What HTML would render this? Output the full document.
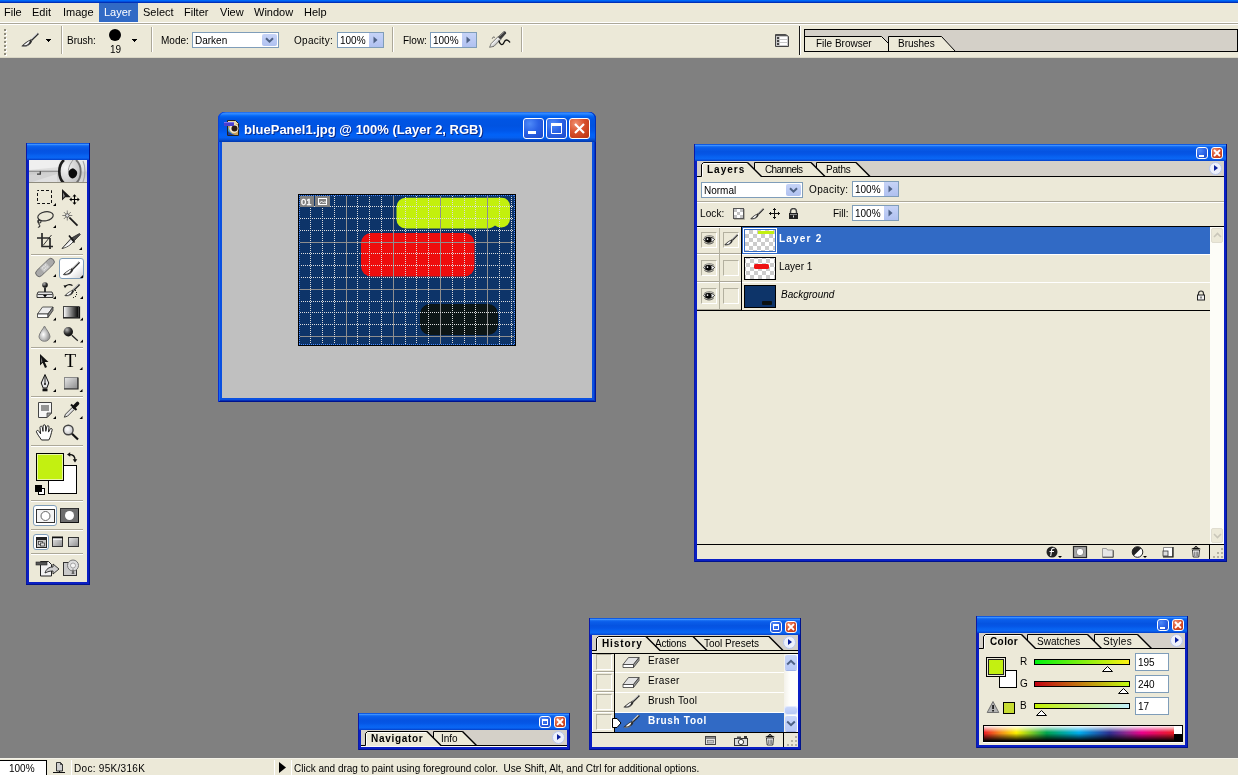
<!DOCTYPE html>
<html>
<head>
<meta charset="utf-8">
<title>Photoshop</title>
<style>
*{box-sizing:border-box;margin:0;padding:0}
html,body{width:1238px;height:775px;overflow:hidden;background:#808080}
body{font-family:"Liberation Sans",sans-serif;font-size:11px;color:#000;position:relative}
.abs{position:absolute}
.t{position:absolute;white-space:nowrap;line-height:12px;font-size:10px}
.b{font-weight:bold}
/* top chrome */
#topblue{left:0;top:0;width:1238px;height:3px;background:linear-gradient(#0068f8 0,#0068f8 33%,#0050e0 34%,#0050e0 66%,#0030b8 67%)}
#menubar{left:0;top:3px;width:1238px;height:19px;background:#ece9d8}
#menubar .t{top:3px;font-size:11px;line-height:13px}
#menusep{left:0;top:22px;width:1238px;height:3px;background:#aca899;border-top:1px solid #fff;border-bottom:1px solid #fff}
#optbar{left:0;top:25px;width:1238px;height:33px;background:#ece9d8}
#optshadow{left:0;top:57px;width:1238px;height:1px;background:#d9d6c5}
.vsep{position:absolute;width:2px;border-left:1px solid #aca899;border-right:1px solid #fff}
.inp{position:absolute;background:#fff;border:1px solid #7f9db9}
.arrbtn{position:absolute;background:linear-gradient(#c6d3f7,#b0c1f0);border-radius:2px}
/* XP palette windows */
.win{position:absolute;background:#0a1fc8}
.win .title{position:absolute;left:0;top:0;right:0;background:linear-gradient(#0a4fe0 0,#2b71f0 2px,#0a5be8 5px,#0553df 60%,#0345d4 100%)}
.win .body{position:absolute;background:#ece9d8}
.tabstrip{position:absolute;left:0;right:0;top:0;height:16px;background:#d4d0c8;border-bottom:1px solid #000}
.capbtn{top:6px;width:21px;height:21px;border-radius:3px;border:1px solid #fff;background:radial-gradient(circle at 30% 25%,#4f8af8 0,#2a62e6 45%,#1c48c8 100%)}
.capbtn svg{position:absolute;left:-1px;top:-1px}
.capx{background:radial-gradient(circle at 30% 25%,#f09070 0,#d8502c 45%,#b8300e 100%)}

.pw{position:absolute;background:#0a1fc4;box-shadow:inset 1px 0 0 #0a19a8,inset -1px 0 0 #00138c,inset 0 -1px 0 #00138c}
.pt{position:absolute;height:17px;background:linear-gradient(to bottom,#0f5ae2 0,#0f5ae2 5%,#3d92ff 7%,#3a8eff 11%,#1a70f2 14%,#0a5eea 22%,#0553e1 45%,#0556e6 60%,#0862f0 75%,#0a66f4 88%,#0650dc 94%,#0340c8 100%)}
.pb{position:absolute;background:#ece9d8}
.sbtn{position:absolute;width:12px;height:12px;border:1px solid #fff;border-radius:3px;background:radial-gradient(circle at 30% 25%,#4f8af8 0,#2a62e6 50%,#1c48c8 100%)}
.sbtn.x{background:radial-gradient(circle at 30% 25%,#f09070 0,#d8502c 50%,#b8300e 100%)}
.sbtn svg{position:absolute;left:-1px;top:-1px}
.fly{position:absolute;width:13px;height:13px;border-radius:50%;background:#eef1fb;border:1px solid #b9c6ee}
.fly:after{content:"";position:absolute;left:4px;top:2px;border-left:4px solid #0a1f9c;border-top:3.5px solid transparent;border-bottom:3.5px solid transparent}
.hl{position:absolute;height:1px}
.sunk{position:absolute;border:1px solid;border-color:#b3b09f #fff #fff #b3b09f;background:#ece9d8}
/* status */
#status{left:0;top:759px;width:1238px;height:16px;background:#ece9d8}
</style>
</head>
<body>
<svg width="0" height="0" style="position:absolute"><defs>
<g id="i-brush"><path d="M16.300 .8l1.700 1.300-6.800 6.700-1.700-1.500z" fill="#2a2a2a"/><path d="M16.300 1.200l-6.200 6" stroke="#f0f0f0" stroke-width="1.100"/><path d="M9.600 7.200l1.700 1.500-.6 1-1.900-1.700z" fill="#777"/><path d="M9.300 7.800C6.500 8.800 3 11.500.3 14.200c3.200 1 7.500 0 9.500-2.700.8-1.200 1.100-2 1.200-2.500z" fill="#2b2b2b"/><path d="M8.800 8.700c-2.200 1-4.400 2.600-6.300 4.600 1.800.2 3.400-.3 4.600-1.300 1-.9 1.500-2 1.700-3.300z" fill="#f4f4f4"/><path d="M1.200 14.400c2.700.5 5.600-.3 7.300-2" stroke="#8a8a8a" stroke-width=".7" fill="none"/></g>
<g id="i-eye"><path d="M.8 2.900C3.200 .2 8.300-.1 11.200 2.300" fill="none" stroke="#6a6a6a" stroke-width=".8"/><path d="M.6 4.600C3 1.500 9 1.500 11.600 4.300 9.300 8 3.300 8.300 .6 4.600z" fill="#f4f4f4" stroke="#2a2a2a" stroke-width="1"/><ellipse cx="5.400" cy="4.700" rx="3.200" ry="2.700" fill="#050505"/><circle cx="4.500" cy="4.100" r=".85" fill="#fff"/><path d="M1.300 7.100C4 9.600 8.500 9.500 10.800 6.800" fill="none" stroke="#333" stroke-width=".9"/></g>
<g id="i-eraser"><path d="M6.500 1.500h10.500l-5.500 7h-10.500z" fill="#e4e4e4" stroke="#3a3a3a" stroke-width=".8"/><path d="M1 8.500h10.500v3h-10.500z" fill="#fff" stroke="#3a3a3a" stroke-width=".8"/><path d="M11.500 8.500l5.500-7v3l-5.500 7z" fill="#9a9a9a" stroke="#3a3a3a" stroke-width=".8"/></g>
<pattern id="chk" width="8" height="8" patternUnits="userSpaceOnUse" x="2" y="2"><rect width="8" height="8" fill="#fff"/><rect x="4" width="4" height="4" fill="#ccc"/><rect y="4" width="4" height="4" fill="#ccc"/></pattern>
</defs></svg>
<div id="root" style="position:absolute;left:0;top:0;width:1238px;height:775px;will-change:transform">
<!-- TOP CHROME -->
<div class="abs" id="topblue"></div>
<div class="abs" id="menubar">
  <div class="abs" style="left:99px;top:0;width:39px;height:19px;background:#316ac5"></div>
  <span class="t" style="left:4px">File</span>
  <span class="t" style="left:32px">Edit</span>
  <span class="t" style="left:63px">Image</span>
  <span class="t" style="left:104px;color:#fff">Layer</span>
  <span class="t" style="left:143px">Select</span>
  <span class="t" style="left:184px">Filter</span>
  <span class="t" style="left:220px">View</span>
  <span class="t" style="left:254px">Window</span>
  <span class="t" style="left:304px">Help</span>
</div>
<div class="abs" id="menusep"></div>
<div class="abs" id="optbar"></div>
<div class="abs" id="optshadow"></div>
<!-- OPTIONS BAR CONTENT -->
<svg class="abs" style="left:4px;top:29px" width="4" height="27"><rect x="1" y="1" width="2" height="2" fill="#fff"/><rect x="0" y="0" width="2" height="2" fill="#8d8a7b"/><rect x="1" y="5" width="2" height="2" fill="#fff"/><rect x="0" y="4" width="2" height="2" fill="#8d8a7b"/><rect x="1" y="9" width="2" height="2" fill="#fff"/><rect x="0" y="8" width="2" height="2" fill="#8d8a7b"/><rect x="1" y="13" width="2" height="2" fill="#fff"/><rect x="0" y="12" width="2" height="2" fill="#8d8a7b"/><rect x="1" y="17" width="2" height="2" fill="#fff"/><rect x="0" y="16" width="2" height="2" fill="#8d8a7b"/><rect x="1" y="21" width="2" height="2" fill="#fff"/><rect x="0" y="20" width="2" height="2" fill="#8d8a7b"/><rect x="1" y="25" width="2" height="2" fill="#fff"/><rect x="0" y="24" width="2" height="2" fill="#8d8a7b"/></svg>
<svg class="abs" style="left:21px;top:32px" width="19" height="16" viewBox="0 0 19 16"><use href="#i-brush"/></svg>
<svg class="abs" style="left:46px;top:39px" width="6" height="4"><path d="M0 0h5v1h-1v1h-1v1h-1v-1h-1v-1h-1z" fill="#000"/></svg>
<div class="vsep" style="left:61px;top:26px;height:28px"></div>
<span class="t" style="left:67px;top:35px">Brush:</span>
<div class="abs" style="left:109px;top:29px;width:12px;height:12px;border-radius:50%;background:#000"></div>
<span class="t" style="left:110px;top:44px">19</span>
<svg class="abs" style="left:132px;top:39px" width="6" height="4"><path d="M0 0h5v1h-1v1h-1v1h-1v-1h-1v-1h-1z" fill="#000"/></svg>
<div class="vsep" style="left:151px;top:27px;height:25px"></div>
<span class="t" style="left:161px;top:35px">Mode:</span>
<div class="inp" style="left:192px;top:32px;width:87px;height:16px"></div>
<span class="t" style="left:195px;top:35px;">Darken</span>
<div class="arrbtn" style="left:262px;top:34px;width:15px;height:12px"></div>
<svg class="abs" style="left:265px;top:37px" width="9" height="7"><path d="M1 1.2L4.5 4.7 8 1.2" fill="none" stroke="#4d6185" stroke-width="2"/></svg>
<span class="t" style="left:294px;top:35px;letter-spacing:.3px">Opacity:</span>
<div class="inp" style="left:337px;top:32px;width:47px;height:16px"></div>
<span class="t" style="left:340px;top:35px;">100%</span>
<div class="arrbtn" style="left:369px;top:33px;width:14px;height:14px;border-radius:0"></div>
<svg class="abs" style="left:373px;top:36px" width="5" height="8"><path d="M0.5 0.5L4.5 4 0.5 7.5z" fill="#4d6185"/></svg>
<div class="vsep" style="left:392px;top:27px;height:25px"></div>
<span class="t" style="left:403px;top:35px">Flow:</span>
<div class="inp" style="left:430px;top:32px;width:47px;height:16px"></div>
<span class="t" style="left:433px;top:35px;">100%</span>
<div class="arrbtn" style="left:462px;top:33px;width:14px;height:14px;border-radius:0"></div>
<svg class="abs" style="left:466px;top:36px" width="5" height="8"><path d="M0.5 0.5L4.5 4 0.5 7.5z" fill="#4d6185"/></svg>
<svg class="abs" style="left:489px;top:30px" width="23" height="19" viewBox="0 0 23 19"><defs><linearGradient id="abg" x1="0" y1="0" x2="1" y2="1"><stop offset="0" stop-color="#444"/><stop offset=".45" stop-color="#f2f2f2"/><stop offset="1" stop-color="#555"/></linearGradient></defs><path d="M.6 17.300l1.600-3.800 6.800-6.800 2.800 2.800-6.800 6.800z" fill="url(#abg)" stroke="#333" stroke-width=".6"/><path d="M9 6.700l5.800-5.400c1.200-.6 2.800.8 2.300 2.200l-5.300 6z" fill="#3c3c3c"/><path d="M10.500 6.300l4.700-4.300" stroke="#8a8a8a" stroke-width=".9"/><path d="M3.300 8.600c.2-1.600 1.800-2 2.600-1" fill="none" stroke="#444" stroke-width=".9"/><path d="M9.800 10.500c.8 3 2.500 4.800 4 3.800s1.300-4 3.500-4.300c1.800-.2 2.600 1.300 3.800 2.400" fill="none" stroke="#111" stroke-width="1.300"/></svg>
<div class="vsep" style="left:521px;top:27px;height:25px"></div>
<svg class="abs" style="left:775px;top:33px" width="15" height="15" viewBox="0 0 15 15"><path d="M0.5 1.5h10l3 2v10h-13z" fill="#c8c8c8" stroke="#444" stroke-width="1"/><path d="M1 1.5h10l2 1.5h-12z" fill="#555"/><g fill="#444"><rect x="2" y="4" width="2" height="2"/><rect x="2" y="7" width="2" height="2"/><rect x="2" y="10" width="2" height="2"/></g><g fill="#fff"><rect x="5" y="4" width="7" height="2"/><rect x="5" y="7" width="7" height="2"/><rect x="5" y="10" width="7" height="2"/></g></svg>
<div class="abs" style="left:799px;top:26px;width:1px;height:29px;background:#1a1a1a"></div>
<div class="abs" style="left:800px;top:26px;width:1px;height:29px;background:#fff"></div>
<svg class="abs" style="left:804px;top:29px" width="434" height="23" viewBox="0 0 434 23"><rect x="0.5" y="0.5" width="433" height="22" fill="#d4d0c8" stroke="#000"/><path d="M0.5 22.5V7.5H77.5L84.5 14.5V7.5H137.5L151.5 22.5z" fill="#ece9d8" stroke="#000"/><path d="M84.5 14v8.5" stroke="#000"/></svg>
<span class="t" style="left:816px;top:38px">File Browser</span>
<span class="t" style="left:898px;top:38px">Brushes</span>

<!-- TOOLBOX -->
<svg class="abs" style="left:26px;top:143px" width="64" height="442" viewBox="26 143 64 442">
<defs>
<linearGradient id="tbt" x1="0" y1="0" x2="0" y2="1"><stop offset="0" stop-color="#0f5ae2"/><stop offset=".05" stop-color="#0f5ae2"/><stop offset=".07" stop-color="#3d92ff"/><stop offset=".11" stop-color="#3a8eff"/><stop offset=".14" stop-color="#1a70f2"/><stop offset=".22" stop-color="#0a5eea"/><stop offset=".45" stop-color="#0553e1"/><stop offset=".6" stop-color="#0556e6"/><stop offset=".75" stop-color="#0862f0"/><stop offset=".88" stop-color="#0a66f4"/><stop offset=".94" stop-color="#0650dc"/><stop offset="1" stop-color="#0340c8"/></linearGradient>
<linearGradient id="gwk" x1="0" y1="0" x2="1" y2="0"><stop offset="0" stop-color="#fff"/><stop offset="1" stop-color="#000"/></linearGradient>
<linearGradient id="ggr" x1="0" y1="0" x2="1" y2="1"><stop offset="0" stop-color="#e8e8e8"/><stop offset="1" stop-color="#8c8c8c"/></linearGradient>
<linearGradient id="gsel" x1="0" y1="0" x2="1" y2="1"><stop offset="0" stop-color="#fff"/><stop offset=".6" stop-color="#fff"/><stop offset="1" stop-color="#cfcfcf"/></linearGradient>
<radialGradient id="gball" cx=".35" cy=".3" r=".8"><stop offset="0" stop-color="#b5b5b5"/><stop offset=".55" stop-color="#2c2c2c"/><stop offset="1" stop-color="#000"/></radialGradient>
<radialGradient id="gdrop" cx=".4" cy=".55" r=".6"><stop offset="0" stop-color="#fff"/><stop offset="1" stop-color="#8a8a8a"/></radialGradient>
<radialGradient id="glens" cx=".4" cy=".4" r=".7"><stop offset="0" stop-color="#fff"/><stop offset="1" stop-color="#bdbdbd"/></radialGradient>
</defs>
<rect x="26" y="143" width="64" height="442" fill="#0a1fc4"/>
<rect x="26" y="143" width="1" height="442" fill="#0a19a8"/><rect x="89" y="143" width="1" height="442" fill="#00138c"/><rect x="26" y="584" width="64" height="1" fill="#00138c"/>
<rect x="27" y="143" width="62" height="17" fill="url(#tbt)"/>
<rect x="29" y="160" width="58" height="422" fill="#ece9d8"/>
<!-- eye picture -->
<clipPath id="eyeclip"><rect x="29" y="160" width="58" height="23"/></clipPath>
<linearGradient id="eyebg" x1="0" y1="0" x2="0" y2="1"><stop offset="0" stop-color="#ececec"/><stop offset=".45" stop-color="#dcdcdc"/><stop offset=".55" stop-color="#c9c9c9"/><stop offset="1" stop-color="#dadada"/></linearGradient>
<radialGradient id="eyein" cx=".3" cy=".35" r=".8"><stop offset="0" stop-color="#f6f6f6"/><stop offset="1" stop-color="#bcbcbc"/></radialGradient>
<g clip-path="url(#eyeclip)">
<rect x="29" y="160" width="58" height="23" fill="url(#eyebg)"/>
<path d="M29 160h30v7l-30 3z" fill="#efefef"/>
<path d="M29 171.300h30" stroke="#8a8a8a" stroke-width="1.200"/>
<path d="M29 175l28-3v11H29z" fill="#d2d2d2"/><path d="M29 183l28-9v9z" fill="#e0e0e0"/>
<path d="M37 174.200h3.300v-3" stroke="#3a3a3a" stroke-width="1.300" fill="none"/>
<ellipse cx="70" cy="171.500" rx="11" ry="13.500" fill="url(#eyein)"/>
<path d="M64 160c-6 5-6.500 17 0 23.500" stroke="#1c1c1c" stroke-width="2.600" fill="none"/>
<path d="M76 160c6 5 6.500 17 0 23.500" stroke="#6e6e6e" stroke-width="1.800" fill="none"/>
<path d="M73 160c-3 4-5 8-4.500 12" stroke="#9a9a9a" stroke-width="1" fill="none"/>
<path d="M68.500 172.500c.5-2.500 2.500-4 4.500-4.200 2.500 1 4.500 3 4.200 5.200-.5 2.800-2.500 5-4.700 5-2.500-.5-4.300-3-4-6z" fill="#0a0a0a"/>
<path d="M83 161c2.500 5 2.500 15 0 21" stroke="#a8a8a8" stroke-width="1.200" fill="none"/>
</g>
<rect x="29" y="182" width="58" height="1" fill="#8f8c7e"/>
<!-- separators -->
<g fill="#aca899"><rect x="31" y="254" width="52" height="1"/><rect x="31" y="347" width="52" height="1"/><rect x="31" y="396" width="52" height="1"/><rect x="31" y="445" width="52" height="1"/><rect x="31" y="500" width="52" height="1"/><rect x="31" y="529" width="52" height="1"/><rect x="31" y="553" width="52" height="1"/></g>
<g fill="#fff"><rect x="31" y="255" width="52" height="1"/><rect x="31" y="348" width="52" height="1"/><rect x="31" y="397" width="52" height="1"/><rect x="31" y="446" width="52" height="1"/><rect x="31" y="501" width="52" height="1"/><rect x="31" y="530" width="52" height="1"/><rect x="31" y="554" width="52" height="1"/></g>

<!-- row1 marquee / move -->
<rect x="37.500" y="190.500" width="14" height="13" fill="none" stroke="#111" stroke-width="1" stroke-dasharray="3 2" stroke-dashoffset="1.500"/>
<path d="M56 206v-3l-3 3z" fill="#000"/>
<path d="M62 189v11.500l3.300-3.200h5.500z" fill="#1a1a1a"/><path d="M63 192.500v5.500l2-2z" fill="#8a8a8a"/>
<path d="M74.500 195.500v8M70.500 199.500h8" stroke="#000" stroke-width="1.100"/><path d="M74.500 194.300l2 2.300h-4zM74.500 204.700l2-2.300h-4zM69.300 199.500l2.300-2v4zM79.700 199.500l-2.300-2v4z" fill="#000"/>
<!-- row2 lasso / wand -->
<ellipse cx="45.500" cy="216.300" rx="7.800" ry="4.500" transform="rotate(-10 45.500 216.300)" fill="none" stroke="#333" stroke-width="1.200"/>
<path d="M39 219.500c-2 1.500-1.500 3.500.5 3.500s2-2.500.2-2.500-1.500 3 -.2 4.500-1 2-1.500 2.500" fill="none" stroke="#333" stroke-width="1.100"/>
<path d="M56 228v-3l-3 3z" fill="#000"/>
<path d="M67.300 210.500v10M62.300 215.500h10M63.800 212l7 7M70.800 212l-7 7" stroke="#555" stroke-width=".7"/><circle cx="67.300" cy="215.500" r="1.800" fill="#ddd" stroke="#222" stroke-width=".6"/>
<path d="M69.500 217.700l8 8" stroke="#1a1a1a" stroke-width="1.700"/>
<!-- row3 crop / slice -->
<path d="M37 238h13M42 233v13.500h11M50 238v11" stroke="#2a2a2a" stroke-width="1.700" fill="none"/><path d="M43 245.500l8.500-10.500" stroke="#222" stroke-width=".9"/>
<path d="M62 248.500l9.500-10.500 3 2.500c-3.500 4-7.500 7-12.500 8z" fill="#d9d9d9" stroke="#222" stroke-width=".9"/><path d="M71.500 238l8-4.500.8 1-5.800 6z" fill="#4a4a4a" stroke="#222" stroke-width=".8"/><path d="M63.500 247.800c3.500-1 7-3.500 10-7l-1-.8z" fill="#fff"/><path d="M69 235.500l5.500 7" stroke="#111" stroke-width="1.600"/>
<path d="M82 250v-3l-3 3z" fill="#000"/>
<!-- row4 heal / brush(selected) -->
<g transform="rotate(-44 45 267.500)"><rect x="33.500" y="264" width="23" height="7" rx="3.500" fill="#a9a9a9" stroke="#666" stroke-width=".9"/><rect x="41" y="264.500" width="8" height="6" fill="#c6c6c6"/><g fill="#eee"><circle cx="43" cy="266" r=".6"/><circle cx="45" cy="266" r=".6"/><circle cx="47" cy="266" r=".6"/><circle cx="43" cy="268.500" r=".6"/><circle cx="45" cy="268.500" r=".6"/><circle cx="47" cy="268.500" r=".6"/></g></g>
<path d="M56 277v-3l-3 3z" fill="#000"/>
<rect x="59.500" y="258.500" width="24" height="20" rx="2.500" fill="url(#gsel)" stroke="#7f9db9"/>
<g transform="translate(62.500 260.800) scale(.98)"><use href="#i-brush"/></g>
<path d="M83 278v-3l-3 3z" fill="#000"/>
<!-- row5 stamp / history brush -->
<circle cx="45" cy="285" r="2.800" fill="url(#gball)"/><rect x="44" y="287.500" width="2" height="4.500" fill="#333"/><path d="M38 292h14l1 2.500v3h-16v-3z" fill="#e6e6e6" stroke="#222" stroke-width=".9"/><path d="M37.500 294.500h15" stroke="#222" stroke-width=".8"/><path d="M43 295h4l-2 2.500z" fill="#000"/>
<path d="M56 299v-3l-3 3z" fill="#000"/>
<g transform="translate(64 283) scale(.9)"><use href="#i-brush"/></g>
<path d="M65 287c1.500-2.500 5-3 7.500-1.500" fill="none" stroke="#111" stroke-width="1.100"/><path d="M63.500 285.200l3.200.3-1.700 2.800z" fill="#111"/>
<g fill="#222"><rect x="75" y="290" width="1" height="1"/><rect x="76" y="292" width="1" height="1"/><rect x="76" y="294" width="1" height="1"/><rect x="75" y="296" width="1" height="1"/><rect x="73" y="297" width="1" height="1"/></g>
<path d="M83 299v-3l-3 3z" fill="#000"/>
<!-- row6 eraser / gradient -->
<path d="M42.500 307h10.500l-5 7h-10.500z" fill="#ececec" stroke="#333" stroke-width=".8"/><path d="M37.500 314h10.500v3.500h-10.500z" fill="#fff" stroke="#333" stroke-width=".8"/><path d="M48 314l5-7v3.500l-5 7z" fill="#8a8a8a" stroke="#333" stroke-width=".8"/>
<path d="M56 320.5v-3l-3 3z" fill="#000"/>
<rect x="63.500" y="306.500" width="15" height="11" fill="url(#gwk)" stroke="#444" stroke-width="1"/><path d="M63 318h16.500v-11.500" stroke="#111" stroke-width="1.200" fill="none"/>
<path d="M83 320.5v-3l-3 3z" fill="#000"/>
<!-- row7 blur / dodge -->
<path d="M44.500 326c-1.500 3-5.500 7.500-5.500 10.500a5.500 4.800 0 0 0 11 0c0-3-4-7.500-5.500-10.500z" fill="url(#gdrop)" stroke="#777" stroke-width=".9"/>
<path d="M56 342.5v-3l-3 3z" fill="#000"/>
<circle cx="68.300" cy="331.700" r="4.700" fill="url(#gball)"/><path d="M71.800 335.200l6 5.600" stroke="#222" stroke-width="1.200"/>
<path d="M83 342.5v-3l-3 3z" fill="#000"/>
<!-- row8 path select / type -->
<path d="M40 354v11.500l2.700-2.700 2.300 5.200 2-1-2.300-5h3.800z" fill="#111"/><path d="M41 357v6l1.500-1.500z" fill="#777"/>
<path d="M56 370v-3l-3 3z" fill="#000"/>
<text x="64.500" y="367" font-family="Liberation Serif" font-size="19" fill="#000">T</text>
<path d="M82.5 370v-3l-3 3z" fill="#000"/>
<!-- row9 pen / shape -->
<path d="M45 374.500l-3.800 8.500 2 5h3.600l2-5z" fill="#e6e6e6" stroke="#111" stroke-width="1"/><path d="M45 376v7.500" stroke="#111" stroke-width=".9"/><circle cx="45" cy="384" r="1" fill="#111"/><rect x="42.500" y="388.500" width="5" height="2.800" fill="#111"/>
<path d="M56 392v-3l-3 3z" fill="#000"/>
<rect x="64.500" y="377.500" width="13" height="11" fill="url(#ggr)" stroke="#8a8a8a"/><path d="M64 389h14v-11.500" stroke="#222" stroke-width="1.200" fill="none"/>
<path d="M82.5 392v-3l-3 3z" fill="#000"/>
<!-- row10 notes / eyedropper -->
<path d="M38.500 402.500h13v10.500l-4.500 4.500h-8.500z" fill="#f6f6f6" stroke="#444" stroke-width="1"/><path d="M51.500 413h-4.500v4.500z" fill="#9a9a9a" stroke="#444" stroke-width=".8"/><path d="M41 406h8M41 408h8M41 410h8" stroke="#333" stroke-width="1"/>
<path d="M56 419v-3l-3 3z" fill="#000"/>
<path d="M64.300 417.200l1.200-3 7-7 2 2-7 7z" fill="#e2e2e2" stroke="#333" stroke-width=".9"/><path d="M71 404.500l5.500 5.500" stroke="#111" stroke-width="2"/><path d="M74 407l3.500-3.500" stroke="#111" stroke-width="3.600" stroke-linecap="round"/>
<path d="M82.5 419v-3l-3 3z" fill="#000"/>
<!-- row11 hand / zoom -->
<path d="M41.500 440c-2-3-4-5.500-5-8-.5-1.600 1.600-2.200 2.500-.6l1.600 2.400-.6-6.300c-.1-1.600 2.100-1.700 2.300-.1l.7 4 .1-5.400c0-1.700 2.300-1.700 2.400 0l.3 5.300 1-4.600c.3-1.600 2.400-1.200 2.200.4l-.5 5 1.600-3c.8-1.400 2.500-.5 2 1-1 3.200-1.400 7-3.300 9.900z" fill="#fff" stroke="#222" stroke-width="1"/>
<circle cx="68.300" cy="430" r="4.800" fill="url(#glens)" stroke="#444" stroke-width="1.400"/><path d="M72 433.800l6 5.700" stroke="#111" stroke-width="2.200"/>
<!-- colour swatches -->
<rect x="48.500" y="465.500" width="28" height="28" fill="#fff" stroke="#000"/>
<rect x="36.500" y="453.500" width="27" height="27" fill="#c3f011" stroke="#000"/><rect x="37.500" y="454.500" width="25" height="25" fill="none" stroke="#e8f7a8" stroke-width="1"/>
<path d="M69.500 454.500c3.500 0 5.500 2 5.500 5.500" fill="none" stroke="#111" stroke-width="1.300"/><path d="M67 454.500l3.200-2.300v4.600zM75 462.500l-2.300-3.200h4.600z" fill="#111"/>
<rect x="38.500" y="488.500" width="6" height="6" fill="#fff" stroke="#000"/><rect x="35" y="485" width="7" height="7" fill="#000"/>
<!-- quick mask -->
<rect x="33.500" y="505.500" width="23" height="20" rx="2.500" fill="#fff" stroke="#7f9db9"/>
<rect x="36.500" y="509.500" width="18" height="13" fill="#f4f4f4" stroke="#333"/><circle cx="45.500" cy="516" r="4.500" fill="#fff" stroke="#666"/>
<rect x="60.500" y="508.500" width="18" height="14" fill="#6e6e6e" stroke="#333"/><path d="M60.500 522.500h18v-14" stroke="#111" fill="none"/><circle cx="69.500" cy="515.500" r="4.500" fill="#fff"/>
<!-- screen modes -->
<rect x="33.500" y="534.500" width="15" height="15" rx="2.500" fill="#fff" stroke="#7f9db9"/>
<rect x="36.500" y="537.500" width="10" height="10" fill="#c4c4c4" stroke="#222"/><rect x="37" y="538" width="9" height="2" fill="#222"/><rect x="38.500" y="541.500" width="4" height="3" fill="#ddd" stroke="#333" stroke-width=".7"/><rect x="40.500" y="543" width="4" height="3" fill="#ddd" stroke="#333" stroke-width=".7"/>
<rect x="52.500" y="537.500" width="10" height="9" fill="url(#ggr)" stroke="#333"/><rect x="52" y="536.500" width="11" height="2" fill="#111"/><rect x="53" y="538.500" width="9" height="1.200" fill="#fff"/>
<rect x="68.500" y="537.500" width="10" height="9" fill="url(#ggr)" stroke="#333"/>
<!-- jump to -->
<path d="M40.500 561.500h8l3 3v11.500h-11z" fill="#f2f2f2" stroke="#222"/><rect x="36" y="562" width="11" height="3" fill="#555" stroke="#222" stroke-width=".6"/>
<path d="M45 573c1-4 4-6 8-6v-3l6 5-6 5v-3c-3 0-5 .5-8 2z" fill="#cfcfcf" stroke="#222" stroke-width=".9"/>
<rect x="63.500" y="562.500" width="13" height="13" fill="#c9c9c9" stroke="#333"/><circle cx="73" cy="565.500" r="5.500" fill="#ddd" stroke="#777"/><circle cx="73" cy="565.500" r="2.500" fill="#f4f4f4" stroke="#888" stroke-width=".7"/><path d="M73 568l-1.500 6h3z" fill="#666"/>

</svg>

<!-- DOCUMENT WINDOW -->
<div class="abs" id="docwin" style="left:218px;top:112px;width:378px;height:290px;border-radius:7px 7px 0 0;background:#0a50e0;box-shadow:inset 1px 0 0 #0a2fd0,inset -1px 0 0 #00179c,inset 0 -1px 0 #00138c,inset 2px 0 0 #1668f2,inset -2px 0 0 #0538c8,inset 0 -2px 0 #0530b8">
<div class="abs" style="left:0;top:0;width:378px;height:30px;border-radius:7px 7px 0 0;background:linear-gradient(to bottom,#0a4fd8 0,#3a8cff 3%,#2a86ff 7%,#0f70f8 11%,#0260ee 16%,#0055e4 24%,#0053e1 45%,#0057ea 62%,#0162f8 76%,#0560f0 85%,#0450d6 92%,#0340b8 97%,#0338b0 100%);box-shadow:inset 1px 0 0 #0a3fd8,inset -1px 0 0 #0030b8"></div>
<div class="abs" style="left:4px;top:30px;width:370px;height:256px;background:#c0c0c0"></div>
<!-- title icon -->
<svg class="abs" style="left:6px;top:8px" width="16" height="16" viewBox="0 0 16 16"><path d="M3.500 .5h8l3 3v12h-11z" fill="#e8d8b0" stroke="#222" stroke-width="1"/><path d="M4 4h10v11h-10z" fill="#c9a15a"/><circle cx="10" cy="8.500" r="4.500" fill="#f0e6d0"/><circle cx="10.500" cy="8.500" r="3" fill="#2a1a10"/><path d="M4 3c0 6 2 10 7 12h-7z" fill="#3aa0d8"/><path d="M4 11c2 2 4 3.500 7 4h-7z" fill="#203a9a"/><rect x="0" y="2" width="10" height="4" fill="#4a3fd0"/><rect x="0" y="2" width="10" height="1" fill="#7a70f0"/></svg>
<span class="t b" style="left:26px;top:10px;font-size:13px;line-height:15px;color:#fff;text-shadow:1px 1px 0 #0a2a8a;letter-spacing:0">bluePanel1.jpg @ 100% (Layer 2, RGB)</span>
<!-- caption buttons -->
<div class="abs capbtn" style="left:305px"><svg width="21" height="21"><rect x="5" y="13" width="8" height="3" fill="#fff"/></svg></div>
<div class="abs capbtn" style="left:328px"><svg width="21" height="21"><path d="M5.500 6.500h10v9h-10z" fill="none" stroke="#fff" stroke-width="1"/><rect x="5" y="5" width="11" height="3" fill="#fff"/></svg></div>
<div class="abs capbtn capx" style="left:351px"><svg width="21" height="21"><path d="M6 6l9 9M15 6l-9 9" stroke="#fff" stroke-width="2.200"/></svg></div>
</div>
<!-- canvas image -->
<svg class="abs" style="left:298px;top:194px" width="218" height="152" viewBox="298 194 218 152">
<defs><filter id="soft" x="-5%" y="-10%" width="110%" height="120%"><feGaussianBlur stdDeviation=".65"/></filter><clipPath id="imclip"><rect x="299" y="195" width="216" height="150"/></clipPath></defs>
<rect x="298" y="194" width="218" height="152" fill="#000"/>
<rect x="299" y="195" width="216" height="150" fill="#0d3469"/>
<g clip-path="url(#imclip)">
<g filter="url(#soft)">
<path d="M405.500 197.800h96.500a8 8 0 0 1 8 8v13.200a8.500 8.500 0 0 1-8.500 8.500c-3 0-5-.8-6.500-2-1.500 1.500-4 3-8 3h-81.500a9 9 0 0 1-9-9v-12.700a9 9 0 0 1 9-9z" fill="#c3f011"/>
<rect x="361" y="233" width="113.500" height="43.500" rx="10" fill="#ee1111"/>
<rect x="420" y="304" width="78" height="31" rx="10" fill="#0b1212"/>
</g>
<g shape-rendering="crispEdges" fill="none">
<path d="M346.5 196V344 M393.5 196V344 M440.5 196V344 M487.5 196V344 M300 242.5H514 M300 289.5H514 M300 336.5H514" stroke="#8e8e8e" stroke-width="1"/>
<path d="M310.5 196V344 M322.5 196V344 M334.5 196V344 M416.5 196V344 M428.5 196V344 M452.5 196V344 M464.5 196V344 M300 206.5H514 M300 218.5H514 M300 230.5H514 M300 312.5H514 M300 324.5H514" stroke="#dcdcdc" stroke-width="1" stroke-dasharray="1 1"/>
<path d="M357.5 196V344 M369.5 196V344 M381.5 196V344 M405.5 196V344 M475.5 196V344 M499.5 196V344 M511.5 196V344 M300 253.5H514 M300 265.5H514 M300 277.5H514 M300 301.5H514" stroke="#dcdcdc" stroke-width="1" stroke-dasharray="1 1" stroke-dashoffset="1"/>
<path d="M299 195.500H515M299 344.500H515" stroke="#4a8cff" stroke-width="1" stroke-dasharray="1 1"/>
<path d="M299.500 195V345M514.500 195V345" stroke="#4a8cff" stroke-width="1" stroke-dasharray="1 1"/>
</g>
<rect x="300" y="196" width="14" height="11" fill="#808080"/><rect x="315" y="196" width="15" height="11" fill="#808080"/>
<text x="301" y="205" font-family="Liberation Sans" font-size="9.500" fill="#fff" stroke="#fff" stroke-width=".35">01</text>
<rect x="318.500" y="198.500" width="8" height="6" fill="none" stroke="#fff" stroke-width="1"/><path d="M319 204l2.500-3 2 2 1.500-1.500 1.500 2" fill="none" stroke="#fff" stroke-width=".9"/>
</g>
</svg>

<!-- LAYERS PALETTE -->
<div class="pw" style="left:694px;top:144px;width:533px;height:418px"></div>
<div class="pt" style="left:695px;top:144px;width:531px"></div>
<div class="pb" style="left:697px;top:161px;width:527px;height:398px"></div>
<div class="sbtn" style="left:1196px;top:147px"><svg width="12" height="12"><rect x="3" y="8" width="5" height="2" fill="#fff"/></svg></div>
<div class="sbtn x" style="left:1211px;top:147px"><svg width="12" height="12"><path d="M3 3l6 6M9 3l-6 6" stroke="#fff" stroke-width="1.800"/></svg></div>
<!-- tabs -->
<svg class="abs" style="left:697px;top:161px" width="527" height="16" viewBox="697 161 527 16"><rect x="697" y="161" width="527" height="16" fill="#d4d0c8"/><path d="M816.5 176.5V162.5H856L870 176.5z" fill="#ece9d8"/><path d="M816.5 176.5V162.5H856.3" fill="none" stroke="#000"/><path d="M856 162.5L870 176.5" stroke="#000" stroke-width="1.45"/><path d="M754.5 176.5V162.5H811L825 176.5z" fill="#ece9d8"/><path d="M754.5 176.5V162.5H811.3" fill="none" stroke="#000"/><path d="M811 162.5L825 176.5" stroke="#000" stroke-width="1.45"/><path d="M697 176.5H701.5V164.5l2-2H747.5L761.5 176.5H1224v1H697z" fill="#ece9d8"/><path d="M702.5 165.0V176.5M703.5 163.5H746.5" stroke="#fff"/><path d="M697 176.5H701.5V164.5l2-2H747.8" fill="none" stroke="#000"/><path d="M747.5 162.5L761.5 176.5" stroke="#000" stroke-width="1.45"/><path d="M761.0 176.5H1224" stroke="#000"/></svg>
<span class="t b" style="left:707px;top:164px;letter-spacing:1px">Layers</span>
<span class="t" style="left:765px;top:164px;letter-spacing:-.6px">Channels</span>
<span class="t" style="left:826px;top:164px;letter-spacing:-.2px">Paths</span>
<div class="fly" style="left:1209px;top:162px"></div>
<!-- blend row -->
<div class="inp" style="left:701px;top:182px;width:102px;height:16px"></div>
<span class="t" style="left:704px;top:185px">Normal</span>
<div class="arrbtn" style="left:786px;top:184px;width:15px;height:12px"></div>
<svg class="abs" style="left:789px;top:187px" width="9" height="7"><path d="M1 1.200L4.500 4.700 8 1.200" fill="none" stroke="#4d6185" stroke-width="2"/></svg>
<span class="t" style="left:809px;top:184px;letter-spacing:.35px">Opacity:</span>
<div class="inp" style="left:852px;top:181px;width:47px;height:16px"></div>
<span class="t" style="left:855px;top:184px">100%</span>
<div class="arrbtn" style="left:884px;top:182px;width:14px;height:14px;border-radius:0"></div>
<svg class="abs" style="left:888px;top:185px" width="5" height="8"><path d="M.5 .5L4.500 4 .5 7.500z" fill="#4d6185"/></svg>
<div class="hl" style="left:697px;top:201px;width:527px;background:#aca899"></div><div class="hl" style="left:697px;top:202px;width:527px;background:#fff"></div>
<!-- lock row -->
<span class="t" style="left:700px;top:208px;letter-spacing:.1px">Lock:</span>
<svg class="abs" style="left:733px;top:208px" width="12" height="12"><rect x=".5" y=".5" width="10" height="10" fill="#fff" stroke="#555"/><g fill="#c4c4c4"><rect x="1" y="1" width="3" height="3"/><rect x="7" y="1" width="3" height="3"/><rect x="4" y="4" width="3" height="3"/><rect x="1" y="7" width="3" height="3"/><rect x="7" y="7" width="3" height="3"/></g><path d="M1 11.500h10.500v-10.500" stroke="#b5b2a2" fill="none"/></svg>
<svg class="abs" style="left:750px;top:207px" width="15" height="14" viewBox="0 0 19 16"><use href="#i-brush"/></svg>
<svg class="abs" style="left:769px;top:208px" width="11" height="11" shape-rendering="crispEdges"><g fill="#111"><rect x="5" y="0" width="1" height="11"/><rect x="0" y="5" width="11" height="1"/><rect x="4" y="1" width="3" height="1"/><rect x="4" y="9" width="3" height="1"/><rect x="1" y="4" width="1" height="3"/><rect x="9" y="4" width="1" height="3"/></g></svg>
<svg class="abs" style="left:788px;top:208px" width="11" height="12" viewBox="0 0 11 12"><path d="M2.500 5v-1.500a3 3 0 0 1 6 0v1.500" fill="none" stroke="#444" stroke-width="1.400"/><rect x="1" y="5" width="9" height="6" fill="#222"/><rect x="2" y="6" width="7" height="1" fill="#888"/><rect x="5" y="7.500" width="1" height="2" fill="#ddd"/></svg>
<span class="t" style="left:833px;top:208px">Fill:</span>
<div class="inp" style="left:852px;top:205px;width:47px;height:16px"></div>
<span class="t" style="left:855px;top:208px">100%</span>
<div class="arrbtn" style="left:884px;top:206px;width:14px;height:14px;border-radius:0"></div>
<svg class="abs" style="left:888px;top:209px" width="5" height="8"><path d="M.5 .5L4.500 4 .5 7.500z" fill="#4d6185"/></svg>
<!-- layer list -->
<div class="hl" style="left:697px;top:226px;width:527px;background:#000"></div>
<div class="abs" style="left:742px;top:227px;width:468px;height:27px;background:#316ac5"></div>
<div class="hl" style="left:697px;top:254px;width:513px;background:#fff"></div>
<div class="hl" style="left:697px;top:281px;width:44px;background:#aca899"></div><div class="hl" style="left:697px;top:227px;width:44px;background:#fff"></div><div class="hl" style="left:697px;top:282px;width:513px;background:#fff"></div>
<div class="hl" style="left:697px;top:253px;width:44px;background:#aca899"></div><div class="hl" style="left:697px;top:309px;width:44px;background:#aca899"></div>
<div class="hl" style="left:697px;top:310px;width:513px;background:#000"></div>
<div class="abs" style="left:741px;top:226px;width:1px;height:85px;background:#000"></div>
<div class="abs" style="left:719px;top:228px;width:1px;height:82px;background:#b3b09f"></div>
<!-- eye / link cells -->
<div class="sunk" style="left:701px;top:232px;width:16px;height:16px"></div><div class="sunk" style="left:723px;top:232px;width:16px;height:16px"></div>
<div class="sunk" style="left:701px;top:260px;width:16px;height:16px"></div><div class="sunk" style="left:723px;top:260px;width:16px;height:16px"></div>
<div class="sunk" style="left:701px;top:288px;width:16px;height:16px"></div><div class="sunk" style="left:723px;top:288px;width:16px;height:16px"></div>
<svg class="abs" style="left:703px;top:235px" width="12" height="10" viewBox="0 0 12 10"><use href="#i-eye"/></svg>
<svg class="abs" style="left:703px;top:263px" width="12" height="10" viewBox="0 0 12 10"><use href="#i-eye"/></svg>
<svg class="abs" style="left:703px;top:291px" width="12" height="10" viewBox="0 0 12 10"><use href="#i-eye"/></svg>
<svg class="abs" style="left:724px;top:233px" width="15" height="14" viewBox="0 0 19 16"><use href="#i-brush"/></svg>
<!-- thumbs -->
<svg class="abs" style="left:743px;top:228px" width="34" height="25" viewBox="0 0 34 25"><rect x=".5" y=".5" width="33" height="24" fill="#316ac5" stroke="#fff"/><rect x="2" y="2" width="30" height="21" fill="url(#chk)"/><rect x="15" y="3" width="16" height="3" fill="#c3f011"/></svg>
<svg class="abs" style="left:744px;top:257px" width="32" height="23" viewBox="0 0 32 23"><rect x=".5" y=".5" width="31" height="22" fill="url(#chk)" stroke="#000"/><rect x="10" y="7" width="15" height="5" rx="1.500" fill="#ee1111"/></svg>
<svg class="abs" style="left:744px;top:285px" width="32" height="23" viewBox="0 0 32 23"><rect x=".5" y=".5" width="31" height="22" fill="#0d3469" stroke="#000"/><rect x="18" y="16" width="10" height="4" rx="1" fill="#0b1212"/></svg>
<span class="t b" style="left:779px;top:233px;color:#fff;letter-spacing:1.2px">Layer 2</span>
<span class="t" style="left:779px;top:261px">Layer 1</span>
<span class="t" style="left:781px;top:289px;font-style:italic">Background</span>
<svg class="abs" style="left:1196px;top:290px" width="10" height="11" viewBox="0 0 10 11"><path d="M2.500 5v-1.500a2.500 2.500 0 0 1 5 0v1.500" fill="none" stroke="#333" stroke-width="1.200"/><rect x="1.500" y="5" width="7" height="5" fill="#f0f0f0" stroke="#222"/><rect x="4.500" y="6.500" width="1" height="2" fill="#222"/></svg>
<!-- scrollbar -->
<div class="abs" style="left:1210px;top:227px;width:14px;height:317px;background:#fdfdf8"></div>
<div class="abs" style="left:1211px;top:228px;width:12px;height:15px;background:#ece9d8;border-radius:2px;border:1px solid #e0ddd0"></div>
<svg class="abs" style="left:1213px;top:232px" width="9" height="6"><path d="M1 5L4.500 1.500 8 5" fill="none" stroke="#c9c6b9" stroke-width="1.600"/></svg>
<div class="abs" style="left:1211px;top:528px;width:12px;height:15px;background:#ece9d8;border-radius:2px;border:1px solid #e0ddd0"></div>
<svg class="abs" style="left:1213px;top:533px" width="9" height="6"><path d="M1 1L4.500 4.500 8 1" fill="none" stroke="#c9c6b9" stroke-width="1.600"/></svg>
<!-- bottom strip -->
<div class="hl" style="left:697px;top:544px;width:527px;background:#000"></div>
<div class="abs" style="left:1209px;top:544px;width:1px;height:15px;background:#000"></div>
<svg class="abs" style="left:1040px;top:545px" width="184" height="14" viewBox="1040 545 184 14">
<circle cx="1052" cy="552" r="5.500" fill="#222"/><path d="M1054.500 548.500c-2-.8-3 .5-3 2.500l-.8 5M1049.500 551.500h4.500" stroke="#fff" stroke-width="1.100" fill="none"/><path d="M1058 556h4l-2 2z" fill="#000"/>
<rect x="1073.500" y="546.500" width="13" height="11" fill="#a8a8a8" stroke="#2a2a2a" stroke-width="1.200"/><circle cx="1080" cy="552" r="3.700" fill="#fff" stroke="#555" stroke-width=".6"/>
<path d="M1102.500 548.500h4l1 1.500h5.500v7h-10.500z" fill="#e6e6e6" stroke="#8a8a8a" stroke-width=".8"/><path d="M1102.500 557.300h10.800v-7" fill="none" stroke="#444" stroke-width=".9"/>
<circle cx="1137.500" cy="552" r="5.300" fill="#fff" stroke="#222" stroke-width="1"/><path d="M1133.700 555.700a5.300 5.300 0 0 1 7.500-7.500z" fill="#222"/><path d="M1143 556h4l-2 2z" fill="#000"/>
<path d="M1163.500 547.500h9v9h-9z" fill="#fff" stroke="#777" stroke-width=".8"/><path d="M1163 557h10v-10" stroke="#111" stroke-width="1.200" fill="none"/><rect x="1163" y="551" width="5" height="5" fill="#ddd" stroke="#333" stroke-width=".8"/>
<path d="M1192.500 550h7l-.7 7h-5.600z" fill="#fff" stroke="#222" stroke-width=".9"/><path d="M1191.300 549.200c1-2.200 8.400-2.200 9.400 0z" fill="#111"/><path d="M1194.500 547.600c.3-1.500 2.700-1.500 3 0" stroke="#111" fill="none" stroke-width="1"/><path d="M1194.700 551.500v4.500M1196.200 551.500v4.500M1197.700 551.500v4.500" stroke="#333" stroke-width=".7"/>
<g fill="#b5b2a2"><rect x="1221" y="548" width="2" height="2"/><rect x="1217" y="552" width="2" height="2"/><rect x="1221" y="552" width="2" height="2"/><rect x="1213" y="556" width="2" height="2"/><rect x="1217" y="556" width="2" height="2"/><rect x="1221" y="556" width="2" height="2"/></g>
</svg>

<!-- HISTORY PALETTE -->
<div class="pw" style="left:589px;top:618px;width:212px;height:132px"></div>
<div class="pt" style="left:590px;top:618px;width:210px"></div>
<div class="pb" style="left:592px;top:635px;width:206px;height:112px"></div>
<div class="sbtn" style="left:770px;top:621px"><svg width="12" height="12"><rect x="3.500" y="3.500" width="5" height="5" fill="none" stroke="#fff"/><rect x="3" y="3" width="6" height="2" fill="#fff"/></svg></div>
<div class="sbtn x" style="left:785px;top:621px"><svg width="12" height="12"><path d="M3 3l6 6M9 3l-6 6" stroke="#fff" stroke-width="1.800"/></svg></div>
<svg class="abs" style="left:592px;top:635px" width="206" height="19" viewBox="592 635 206 19"><rect x="592" y="635" width="206" height="16" fill="#d4d0c8"/><path d="M688 650.5V636.5H769L783 650.5z" fill="#ece9d8"/><path d="M688 650.5V636.5H769.3" fill="none" stroke="#000"/><path d="M769 636.5L783 650.5" stroke="#000" stroke-width="1.45"/><path d="M640 650.5V636.5H693L707 650.5z" fill="#ece9d8"/><path d="M640 650.5V636.5H693.3" fill="none" stroke="#000"/><path d="M693 636.5L707 650.5" stroke="#000" stroke-width="1.45"/><path d="M592 650.5H596.5V638.5l2-2H646L660 650.5H798v1H592z" fill="#ece9d8"/><path d="M597.5 639.0V650.5M598.5 637.5H645" stroke="#fff"/><path d="M592 650.5H596.5V638.5l2-2H646.3" fill="none" stroke="#000"/><path d="M646 636.5L660 650.5" stroke="#000" stroke-width="1.45"/><path d="M659.5 650.5H798" stroke="#000"/><rect x="592" y="651" width="206" height="2" fill="#ece9d8"/><rect x="592" y="653" width="206" height="1" fill="#000"/></svg>
<span class="t b" style="left:602px;top:638px;letter-spacing:.9px">History</span>
<span class="t" style="left:655px;top:638px;letter-spacing:-.2px">Actions</span>
<span class="t" style="left:704px;top:638px">Tool Presets</span>
<div class="fly" style="left:783px;top:636px"></div>
<!-- rows -->
<div class="abs" style="left:615px;top:713px;width:169px;height:19px;background:#316ac5"></div>
<div class="hl" style="left:592px;top:672px;width:192px;background:#fff"></div><div class="hl" style="left:592px;top:692px;width:192px;background:#fff"></div><div class="hl" style="left:592px;top:712px;width:192px;background:#fff"></div>
<div class="hl" style="left:592px;top:671px;width:22px;background:#aca899"></div><div class="hl" style="left:592px;top:691px;width:22px;background:#aca899"></div><div class="hl" style="left:592px;top:711px;width:22px;background:#aca899"></div>
<div class="abs" style="left:614px;top:654px;width:1px;height:78px;background:#000"></div>
<div class="abs" style="left:592px;top:654px;width:1px;height:78px;background:#fff"></div><div class="sunk" style="left:596px;top:654px;width:16px;height:16px"></div><div class="sunk" style="left:596px;top:674px;width:16px;height:16px"></div><div class="sunk" style="left:596px;top:694px;width:16px;height:16px"></div><div class="sunk" style="left:596px;top:714px;width:16px;height:16px"></div>
<svg class="abs" style="left:622px;top:656px" width="18" height="13" viewBox="0 0 18 13"><use href="#i-eraser"/></svg>
<svg class="abs" style="left:622px;top:676px" width="18" height="13" viewBox="0 0 18 13"><use href="#i-eraser"/></svg>
<svg class="abs" style="left:623px;top:694px" width="18" height="15" viewBox="0 0 19 16"><use href="#i-brush"/></svg>
<svg class="abs" style="left:623px;top:714px" width="18" height="15" viewBox="0 0 19 16"><use href="#i-brush"/></svg>
<svg class="abs" style="left:612px;top:718px" width="10" height="10" viewBox="0 0 10 10"><path d="M.5 .5h4.500l4 4.500-4 4.500H.5z" fill="#fff" stroke="#000"/></svg>
<span class="t" style="left:648px;top:655px;letter-spacing:.4px">Eraser</span>
<span class="t" style="left:648px;top:675px;letter-spacing:.4px">Eraser</span>
<span class="t" style="left:648px;top:695px;letter-spacing:.2px">Brush Tool</span>
<span class="t b" style="left:648px;top:715px;color:#fff;letter-spacing:.7px">Brush Tool</span>
<!-- scrollbar -->
<div class="abs" style="left:784px;top:654px;width:14px;height:78px;background:linear-gradient(to right,#f3f1ea,#fefefb 40%,#fefefb)"></div>
<div class="abs" style="left:785px;top:655px;width:12px;height:15px;background:linear-gradient(#c9d7fb,#b7c8f6);border-radius:2px;box-shadow:0 1px 0 #9fb3e8"></div>
<svg class="abs" style="left:786px;top:659px" width="10" height="7"><path d="M1.200 5.500L5 1.800 8.800 5.500" fill="none" stroke="#4d6185" stroke-width="2"/></svg>
<div class="abs" style="left:785px;top:707px;width:12px;height:7px;background:linear-gradient(#c9d7fb,#b7c8f6);border-radius:2px;box-shadow:0 0 0 1px #e4ebfd"></div>
<div class="abs" style="left:785px;top:716px;width:12px;height:15px;background:linear-gradient(#c9d7fb,#b7c8f6);border-radius:2px;box-shadow:0 1px 0 #9fb3e8"></div>
<svg class="abs" style="left:786px;top:720px" width="10" height="7"><path d="M1.200 1.500L5 5.200 8.800 1.500" fill="none" stroke="#4d6185" stroke-width="2"/></svg>
<!-- bottom strip -->
<div class="hl" style="left:592px;top:732px;width:206px;background:#000"></div>
<div class="abs" style="left:783px;top:732px;width:1px;height:15px;background:#000"></div>
<svg class="abs" style="left:700px;top:733px" width="98" height="14" viewBox="700 733 98 14">
<rect x="705.500" y="736.500" width="10" height="8" fill="#e4e4e4" stroke="#444"/><rect x="706" y="737" width="9" height="2" fill="#888"/><rect x="707.500" y="740.500" width="6" height="2.500" fill="#c8c8c8" stroke="#666" stroke-width=".6"/>
<rect x="734.500" y="738.500" width="13" height="7" fill="#dcdcdc" stroke="#333"/><rect x="737" y="736.500" width="4" height="2" fill="#555"/><rect x="744" y="736" width="3" height="2.500" fill="#333"/><circle cx="741" cy="742" r="2.600" fill="#fff" stroke="#222" stroke-width=".9"/>
<path d="M766.500 738h7l-.7 7h-5.600z" fill="#fff" stroke="#222" stroke-width=".9"/><path d="M765.300 737.200c1-2.200 8.400-2.200 9.400 0z" fill="#111"/><path d="M768.500 735.600c.3-1.500 2.700-1.500 3 0" stroke="#111" fill="none" stroke-width="1"/><path d="M768.700 739.500v4.500M770.200 739.500v4.500M771.700 739.500v4.500" stroke="#333" stroke-width=".7"/>
<g fill="#b5b2a2"><rect x="795" y="736" width="2" height="2"/><rect x="791" y="740" width="2" height="2"/><rect x="795" y="740" width="2" height="2"/><rect x="787" y="744" width="2" height="2"/><rect x="791" y="744" width="2" height="2"/><rect x="795" y="744" width="2" height="2"/></g>
</svg>

<!-- NAVIGATOR PALETTE -->
<div class="pw" style="left:358px;top:713px;width:212px;height:37px"></div>
<div class="pt" style="left:359px;top:713px;width:210px"></div>
<div class="pb" style="left:361px;top:730px;width:206px;height:17px"></div>
<div class="sbtn" style="left:539px;top:716px"><svg width="12" height="12"><rect x="3.500" y="3.500" width="5" height="5" fill="none" stroke="#fff"/><rect x="3" y="3" width="6" height="2" fill="#fff"/></svg></div>
<div class="sbtn x" style="left:554px;top:716px"><svg width="12" height="12"><path d="M3 3l6 6M9 3l-6 6" stroke="#fff" stroke-width="1.800"/></svg></div>
<svg class="abs" style="left:361px;top:730px" width="206" height="17" viewBox="361 730 206 17"><rect x="361" y="730" width="206" height="16" fill="#d4d0c8"/><path d="M433.5 745.5V731.5H462.5L476.5 745.5z" fill="#ece9d8"/><path d="M433.5 745.5V731.5H462.8" fill="none" stroke="#000"/><path d="M462.5 731.5L476.5 745.5" stroke="#000" stroke-width="1.45"/><path d="M361 745.5H365.5V733.5l2-2H427L441 745.5H567v1H361z" fill="#ece9d8"/><path d="M366.5 734.0V745.5M367.5 732.5H426" stroke="#fff"/><path d="M361 745.5H365.5V733.5l2-2H427.3" fill="none" stroke="#000"/><path d="M427 731.5L441 745.5" stroke="#000" stroke-width="1.45"/><path d="M440.5 745.5H567" stroke="#000"/><rect x="361" y="746" width="206" height="1" fill="#fbfaf5"/></svg>
<span class="t b" style="left:371px;top:733px;letter-spacing:.7px">Navigator</span>
<span class="t" style="left:441px;top:733px">Info</span>
<div class="fly" style="left:552px;top:731px"></div>

<!-- COLOR PALETTE -->
<div class="pw" style="left:976px;top:616px;width:212px;height:132px"></div>
<div class="pt" style="left:977px;top:616px;width:210px"></div>
<div class="pb" style="left:979px;top:633px;width:206px;height:112px"></div>
<div class="sbtn" style="left:1157px;top:619px"><svg width="12" height="12"><rect x="3" y="8" width="5" height="2" fill="#fff"/></svg></div>
<div class="sbtn x" style="left:1172px;top:619px"><svg width="12" height="12"><path d="M3 3l6 6M9 3l-6 6" stroke="#fff" stroke-width="1.800"/></svg></div>
<svg class="abs" style="left:979px;top:633px" width="206" height="17" viewBox="979 633 206 17"><rect x="979" y="633" width="206" height="16" fill="#d4d0c8"/><path d="M1094.5 648.5V634.5H1137.5L1151.5 648.5z" fill="#ece9d8"/><path d="M1094.5 648.5V634.5H1137.8" fill="none" stroke="#000"/><path d="M1137.5 634.5L1151.5 648.5" stroke="#000" stroke-width="1.45"/><path d="M1027.5 648.5V634.5H1087.5L1101.5 648.5z" fill="#ece9d8"/><path d="M1027.5 648.5V634.5H1087.8" fill="none" stroke="#000"/><path d="M1087.5 634.5L1101.5 648.5" stroke="#000" stroke-width="1.45"/><path d="M979 648.5H983.5V636.5l2-2H1021.5L1035.5 648.5H1185v1H979z" fill="#ece9d8"/><path d="M984.5 637.0V648.5M985.5 635.5H1020.5" stroke="#fff"/><path d="M979 648.5H983.5V636.5l2-2H1021.8" fill="none" stroke="#000"/><path d="M1021.5 634.5L1035.5 648.5" stroke="#000" stroke-width="1.45"/><path d="M1035.0 648.5H1185" stroke="#000"/><rect x="979" y="649" width="206" height="1" fill="#ece9d8"/></svg>
<span class="t b" style="left:990px;top:636px;letter-spacing:.4px">Color</span>
<span class="t" style="left:1037px;top:636px">Swatches</span>
<span class="t" style="left:1103px;top:636px;letter-spacing:.3px">Styles</span>
<div class="fly" style="left:1170px;top:634px"></div>
<svg class="abs" style="left:979px;top:650px" width="206" height="95" viewBox="979 650 206 95">
<defs>
<linearGradient id="gR"><stop offset="0" stop-color="#00f011"/><stop offset="1" stop-color="#fff011"/></linearGradient>
<linearGradient id="gG"><stop offset="0" stop-color="#c30011"/><stop offset="1" stop-color="#c3ff11"/></linearGradient>
<linearGradient id="gB"><stop offset="0" stop-color="#c3f000"/><stop offset="1" stop-color="#c3f0ff"/></linearGradient>
<linearGradient id="hue"><stop offset="0" stop-color="#ee1c24"/><stop offset=".09" stop-color="#f7941d"/><stop offset=".17" stop-color="#fff200"/><stop offset=".33" stop-color="#00a651"/><stop offset=".5" stop-color="#00aeef"/><stop offset=".66" stop-color="#2e3192"/><stop offset=".75" stop-color="#92278f"/><stop offset=".83" stop-color="#ec008c"/><stop offset="1" stop-color="#ee1c24"/></linearGradient>
<linearGradient id="wk" x1="0" y1="0" x2="0" y2="1"><stop offset="0" stop-color="#fff" stop-opacity=".95"/><stop offset=".42" stop-color="#fff" stop-opacity="0"/><stop offset=".48" stop-color="#000" stop-opacity="0"/><stop offset="1" stop-color="#000" stop-opacity="1"/></linearGradient>
</defs>
<rect x="999.500" y="670.500" width="17" height="17" fill="#fff" stroke="#000"/>
<rect x="986.500" y="657.500" width="19" height="19" fill="#ece9d8" stroke="#000"/><rect x="988.500" y="659.500" width="15" height="15" fill="#c3f011" stroke="#222"/>
<rect x="1034.500" y="659.500" width="95" height="5" fill="url(#gR)" stroke="#000"/>
<rect x="1034.500" y="681.500" width="95" height="5" fill="url(#gG)" stroke="#000"/>
<rect x="1034.500" y="703.500" width="95" height="5" fill="url(#gB)" stroke="#000"/>
<path d="M1107.500 666.500l5 5h-10z" fill="#fff" stroke="#000"/>
<path d="M1123.500 688.500l5 5h-10z" fill="#fff" stroke="#000"/>
<path d="M1041.500 710.500l5 5h-10z" fill="#fff" stroke="#000"/>
<rect x="1135.500" y="653.500" width="33" height="17" fill="#fff" stroke="#7f9db9"/>
<rect x="1135.500" y="675.500" width="33" height="17" fill="#fff" stroke="#7f9db9"/>
<rect x="1135.500" y="697.500" width="33" height="17" fill="#fff" stroke="#7f9db9"/>
<path d="M993 701.500l5.800 11h-11.600z" fill="#b4b4b4" stroke="#666" stroke-width=".9"/><rect x="992.300" y="705" width="1.500" height="4" fill="#000"/><rect x="992.300" y="710" width="1.500" height="1.500" fill="#000"/>
<rect x="1003.500" y="702.500" width="11" height="11" fill="#c8dc32" stroke="#000"/>
<rect x="983" y="725" width="200" height="17" fill="#000"/>
<rect x="984" y="726" width="190" height="15" fill="url(#hue)"/><rect x="984" y="726" width="190" height="15" fill="url(#wk)"/>
<rect x="1174" y="726" width="8" height="8" fill="#fff"/><rect x="1174" y="734" width="8" height="7" fill="#000"/>
<rect x="983" y="742" width="200" height="1" fill="#fff"/>
</svg>
<span class="t" style="left:1020px;top:656px">R</span>
<span class="t" style="left:1020px;top:678px">G</span>
<span class="t" style="left:1020px;top:700px">B</span>
<span class="t" style="left:1138px;top:657px">195</span>
<span class="t" style="left:1138px;top:679px">240</span>
<span class="t" style="left:1138px;top:701px">17</span>

<!-- STATUS BAR -->
<div class="abs" id="status"></div>
<!-- STATUS CONTENT -->
<div class="hl" style="left:0;top:758px;width:1238px;background:#f4f2e8"></div>
<div class="abs" style="left:0;top:760px;width:47px;height:15px;background:#fff;border-top:1px solid #000;border-right:1px solid #000"></div>
<span class="t" style="left:9px;top:763px">100%</span>
<svg class="abs" style="left:52px;top:761px" width="14" height="13" viewBox="0 0 14 13"><path d="M4.500 1.500h4l2 2v6.500h-6z" fill="#d0d0d0" stroke="#222" stroke-width=".9"/><path d="M8.500 1.500v2h2" fill="none" stroke="#222" stroke-width=".8"/><path d="M7.500 10v1.500M1 11.500h12" stroke="#111" stroke-width="1"/></svg>
<div class="abs" style="left:71px;top:760px;width:1px;height:15px;background:#fff"></div>
<span class="t" style="left:74px;top:763px;letter-spacing:.3px">Doc: 95K/316K</span>
<div class="abs" style="left:274px;top:760px;width:1px;height:15px;background:#fff"></div>
<svg class="abs" style="left:279px;top:762px" width="7" height="11"><path d="M0 0l7 5.500-7 5.500z" fill="#000"/></svg>
<div class="abs" style="left:291px;top:760px;width:1px;height:15px;background:#fff"></div>
<span class="t" id="stxt" style="left:294px;top:763px">Click and drag to paint using foreground color.&nbsp; Use Shift, Alt, and Ctrl for additional options.</span>

</div>
</body>
</html>
